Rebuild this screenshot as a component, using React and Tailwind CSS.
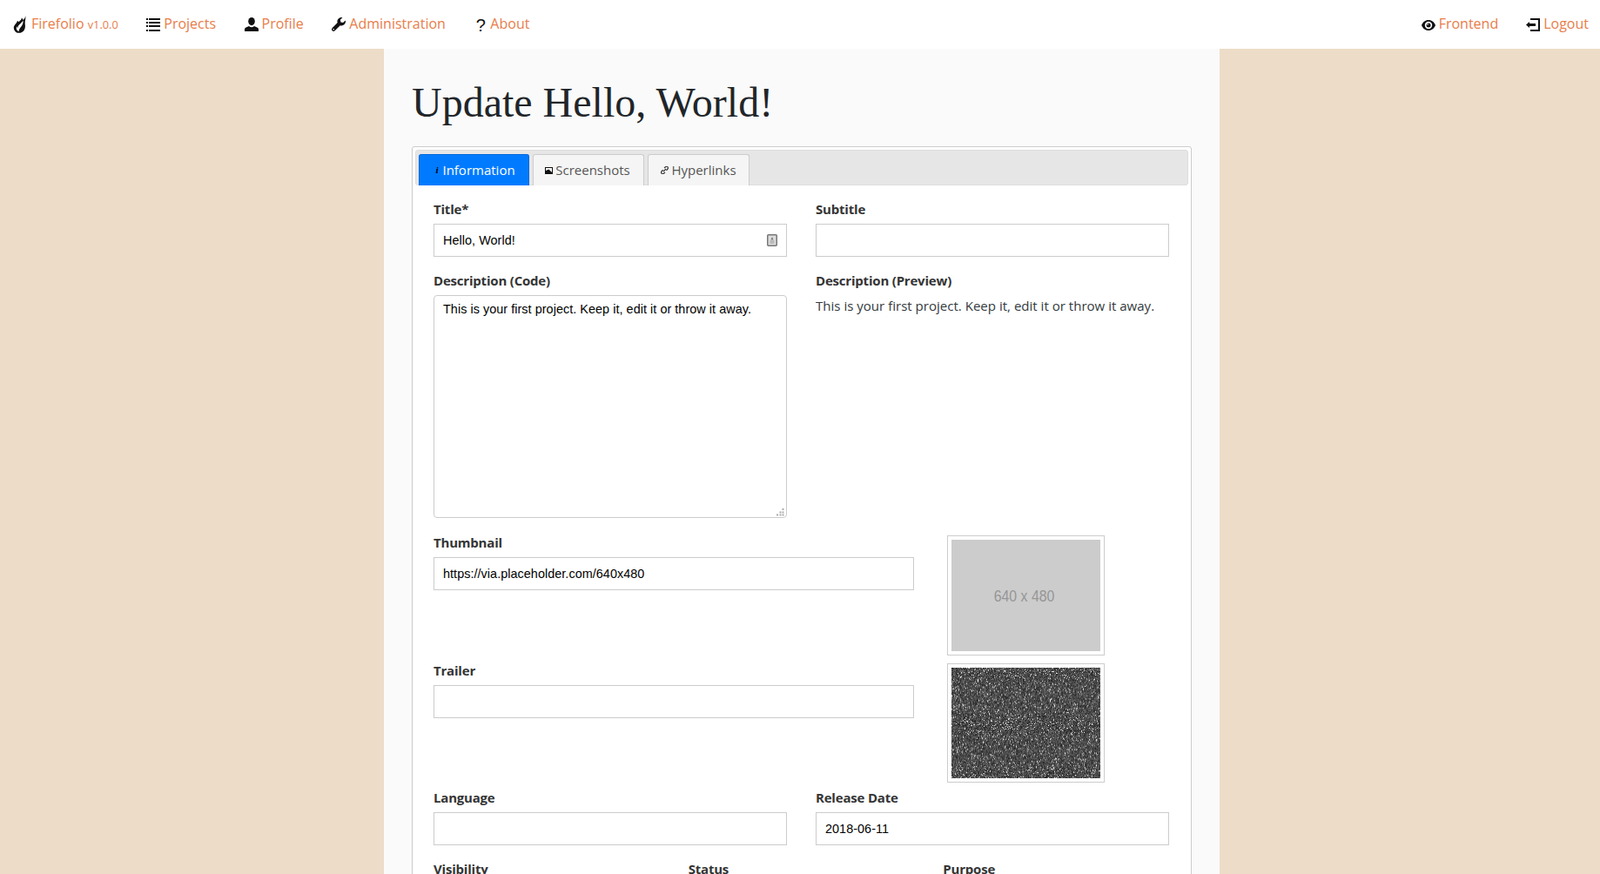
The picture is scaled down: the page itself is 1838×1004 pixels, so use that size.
import React, { useEffect, useRef } from 'react';

const inputCls = "block w-full h-[38px] px-[10px] bg-white border border-[#ccc] text-[14.4px] tracking-[0.05px] text-black outline-none font-['Liberation_Sans',sans-serif]";
const labelCls = "block font-bold text-[15px] tracking-[-0.2px] leading-6 mb-[5px] text-[#343434]";
const tabCls = "h-9 flex items-center justify-center gap-[3px] bg-[#f5f5f5] text-[#555] border border-[#ccc] border-b-0 rounded-t-[3px] text-[15px]";

const FlameIcon = () => (
  <svg width="16" height="20" viewBox="0 0 16 20" className="shrink-0">
    <path fill="#111" d="M14 0c.2 2.500-1 3.800-2.300 5C11.300 3.800 10.600 3 9.800 2.400c.2 2.400-2 3.400-3.600 4.900-.3-.8-.8-1.300-1.400-1.600C5 8 2 9.600 1 12.500c-.8 3 .8 6 3.800 7.200 3.800.6 7.200-1 8.500-4.300 1.200-3 .3-5.300.4-8C13.900 4.900 15 2.500 14 0z" />
    <path fill="#fff" d="M11.400 5.600c.6 3-.6 5-2 6.800-1.400 1.700-2.600 3.200-3 5.800-2.400-1.300-3.200-3.700-2.200-6 .3 1 .7 1.500 1.200 1.700.1-2 1.200-3 2.500-4.100 1.300-1.200 2.600-2.400 3.500-4.200z" />
  </svg>
);

const ListIcon = () => (
  <svg width="16" height="15" viewBox="0 0 16 15" fill="#111" className="shrink-0">
    <rect x="0" y="0" width="2" height="2" /><rect x="3" y="0" width="13" height="2" />
    <rect x="0" y="4" width="2" height="2" /><rect x="3" y="4" width="13" height="2" />
    <rect x="0" y="8" width="2" height="2" /><rect x="3" y="8" width="13" height="2" />
    <rect x="0" y="13" width="2" height="2" /><rect x="3" y="13" width="13" height="2" />
  </svg>
);

const UserIcon = () => (
  <svg width="16" height="16" viewBox="0 0 16 16" fill="#111" className="shrink-0">
    <ellipse cx="8" cy="4.600" rx="3.800" ry="4.600" />
    <path d="M0 16v-2.600c0-1.600 2.800-2.600 5-3.400.9.800 1.900 1.200 3 1.200s2.100-.4 3-1.200c2.200.8 5 1.800 5 3.400V16z" />
  </svg>
);

const WrenchIcon = () => (
  <svg width="16" height="16" viewBox="0 0 16 16" fill="#111" className="shrink-0">
    <path d="M15.800 3.400l-2.700 2.700-2.600-.7-.7-2.600L12.500.1c-1.700-.4-3.500 0-4.700 1.300-1.300 1.300-1.700 3.100-1.100 4.700L.6 12.200c-.8.800-.8 2.200 0 3.100.9.900 2.300.9 3.100 0l6.100-6.100c1.700.6 3.500.2 4.800-1.100 1.300-1.200 1.700-3 1.200-4.700z" />
    <circle cx="2.200" cy="13.800" r=".8" fill="#fff" />
  </svg>
);

const EyeIcon = () => (
  <svg width="16" height="12" viewBox="0 0 16 12" className="shrink-0 mt-[2px]">
    <path fill="#111" fillRule="evenodd" d="M8 0c3.800 0 6.800 2.600 8 6-1.200 3.400-4.200 6-8 6S1.200 9.400 0 6c1.200-3.400 4.200-6 8-6zm0 1.800A4.200 4.200 0 1 0 8 10.200 4.200 4.200 0 0 0 8 1.800z" />
    <circle cx="8" cy="6" r="2.500" fill="#111" />
    <circle cx="7" cy="5" r=".8" fill="#fff" />
  </svg>
);

const LogoutIcon = () => (
  <svg width="16" height="15" viewBox="0 0 16 15" fill="#111" className="shrink-0">
    <path d="M5 0h11v15H5v-2h9V2H5z" />
    <path d="M0 7.500L4 4v2h7v3H4v2z" />
  </svg>
);

const NavLink = ({ icon, children, className = 'gap-1' }) => (
  <a className={`flex items-center text-[16px] text-[#e87d4a] ${className}`}>
    {icon}
    <span className="pb-[3px]">{children}</span>
  </a>
);

// static grain, same look as the random video thumbnail
const Noise = () => {
  const ref = useRef(null);
  useEffect(() => {
    const ctx = ref.current.getContext('2d');
    const img = ctx.createImageData(171, 129);
    let seed = 12345;
    for (let i = 0; i < img.data.length; i += 4) {
      seed = (seed * 1664525 + 1013904223) >>> 0;
      const r = seed / 4294967296;
      const v = r > 0.93 ? 170 + (r - 0.93) * 1200 : 35 + r * 85;
      img.data[i] = img.data[i + 1] = img.data[i + 2] = v;
      img.data[i + 3] = 255;
    }
    ctx.putImageData(img, 0, 0);
  }, []);
  return <canvas ref={ref} width="171" height="129" className="block w-[171px] h-[127px]" />;
};

export default function App() {
  return (
    <div className="bg-[#eddcc8] overflow-hidden h-[1004px] font-['Open_Sans',sans-serif]">
      <nav className="h-14 bg-white flex items-center justify-between pl-[15px] pr-[13px]">
        <div className="flex items-center gap-[32.5px]">
          <NavLink icon={<FlameIcon />} className="gap-[5px]">
            Firefolio <span className="text-[12.800px]">v1.0.0</span>
          </NavLink>
          <NavLink icon={<ListIcon />}>Projects</NavLink>
          <NavLink icon={<UserIcon />}>Profile</NavLink>
          <NavLink icon={<WrenchIcon />}>Administration</NavLink>
          <NavLink icon={<span className="w-4 text-center text-[20px] leading-4 mt-[2px] text-[#111] font-['Liberation_Sans',sans-serif]">?</span>} className="gap-[3px]">About</NavLink>
        </div>
        <div className="flex items-center gap-8">
          <NavLink icon={<EyeIcon />}>Frontend</NavLink>
          <NavLink icon={<LogoutIcon />}>Logout</NavLink>
        </div>
      </nav>

      <main className="w-[960px] ml-[441px] bg-[#fafafa] px-8 pt-[27px]">
        <h1 className="text-[48px] leading-[70px] mb-[15px] text-[#212529] font-['Liberation_Serif',serif]">Update Hello, World!</h1>

        <div className="border border-[#ccc] rounded-[3px] bg-white p-[3px] h-[900px]">
          <div className="h-[41px] bg-[#e6e6e6] border border-[#ddd] rounded-[3px] flex items-end gap-1 pl-[3px]">
            <a className="h-9 w-[127px] -mb-px flex items-center justify-center gap-[5px] pl-[3px] bg-[#007bff] text-white border border-[#0069d9] border-b-0 rounded-t-[3px] text-[15px]">
              <span className="text-black italic font-bold text-[11px] font-['Liberation_Serif',serif]">i</span>Information
            </a>
            <a className={`${tabCls} w-[128px] -mb-px pr-[2px]`}>
              <svg width="9" height="8" viewBox="0 0 9 8" className="shrink-0"><rect width="9" height="8" fill="#111" /><path d="M1 1h7v5L4.500 2.500 1 4z" fill="#fff" /></svg>Screenshots
            </a>
            <a className={`${tabCls} w-[117px] -mb-px`}>
              <svg width="9" height="9" viewBox="0 0 9 9" fill="none" stroke="#333" strokeWidth="1.200" className="shrink-0"><path d="M4 2l1.500-1.200a1.500 1.500 0 0 1 2.500 2.200L6.500 4.800M5 7L3.500 8.200A1.500 1.500 0 0 1 1 6l1.500-1.800M3 6l3-3" /></svg>Hyperlinks
            </a>
          </div>

          <div className="pl-[21px] pr-[22px] pt-[15px]">
            <div className="grid grid-cols-2 gap-x-[33px]">
              <div className="mb-[15px]">
                <label className={labelCls}>Title*</label>
                <div className="relative">
                  <input readOnly value="Hello, World!" className={inputCls} />
                  <svg width="12" height="14" viewBox="0 0 12 14" className="absolute right-[11px] top-3">
                    <rect x=".75" y=".75" width="10.500" height="12.500" rx="1" fill="#ddd" stroke="#777" strokeWidth="1.500" />
                    <path d="M6 3l1.500 3.500h-3z" fill="#777" />
                    <rect x="3.500" y="7.500" width="5" height="1" fill="#999" /><rect x="3.500" y="9.500" width="5" height="1" fill="#999" />
                  </svg>
                </div>
              </div>
              <div className="mb-[15px]">
                <label className={labelCls}>Subtitle</label>
                <input readOnly className={inputCls} />
              </div>
              <div className="mb-4">
                <label className={labelCls}>Description (Code)</label>
                <div className="relative">
                  <textarea readOnly defaultValue="This is your first project. Keep it, edit it or throw it away." className={`${inputCls} h-[256px] py-[5px] rounded-[4px] resize-none`} />
                  <svg width="9" height="9" viewBox="0 0 9 9" fill="#aaa" className="absolute right-[3px] bottom-[2px]">
                    <rect x="6.500" y="0" width="2" height="2" />
                    <rect x="3.500" y="3.500" width="2" height="2" /><rect x="6.500" y="3.500" width="2" height="2" />
                    <rect x="0" y="6.500" width="2" height="2" /><rect x="3.500" y="6.500" width="2" height="2" /><rect x="6.500" y="6.500" width="2" height="2" />
                  </svg>
                </div>
              </div>
              <div>
                <label className={labelCls}>Description (Preview)</label>
                <p className="text-[15.050px] leading-6 text-[#343a40]">This is your first project. Keep it, edit it or throw it away.</p>
              </div>
            </div>

            <div className="grid grid-cols-[552px_1fr] gap-x-[38px]">
              <div className="h-[147px]">
                <label className={labelCls}>Thumbnail</label>
                <input readOnly value="https://via.placeholder.com/640x480" className={inputCls} />
              </div>
              <div className="w-[181px] h-[138px] mt-1 border border-[#ccc] p-1 bg-white">
                <div className="h-[128px] bg-[#ccc] flex items-center justify-center text-[#969696] text-[18px] pr-1 pt-[2px] font-['Liberation_Sans',sans-serif]">
                  <span className="scale-x-[0.88]">640 x 480</span>
                </div>
              </div>
              <div className="h-[146px]">
                <label className={labelCls}>Trailer</label>
                <input readOnly className={inputCls} />
              </div>
              <div className="w-[181px] h-[137px] mt-1 border border-[#ccc] p-1 bg-white">
                <Noise />
              </div>
            </div>

            <div className="grid grid-cols-2 gap-x-[33px]">
              <div className="mb-[15px]">
                <label className={labelCls}>Language</label>
                <input readOnly className={inputCls} />
              </div>
              <div className="mb-[15px]">
                <label className={labelCls}>Release Date</label>
                <input readOnly value="2018-06-11" className={inputCls} />
              </div>
            </div>
            <div className="grid grid-cols-3 gap-x-[33px]">
              <label className={labelCls}>Visibility</label>
              <label className={labelCls}>Status</label>
              <label className={labelCls}>Purpose</label>
            </div>
          </div>
        </div>
      </main>
    </div>
  );
}
